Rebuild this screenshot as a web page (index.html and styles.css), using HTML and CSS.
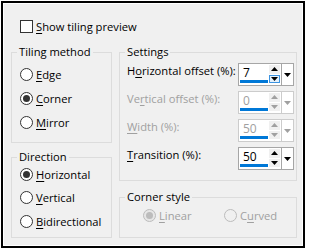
FILE: index.html
```html
<!DOCTYPE html>
<html>
<head>
<meta charset="utf-8">
<link rel="stylesheet" href="styles.css">
</head>
<body>
<div class="frame">
  <div class="panel">
    <div class="check-row"><span class="checkbox"></span><span><u>S</u>how tiling preview</span></div>
    <div class="cols">
      <div class="col col-left">
        <fieldset class="group g-tiling">
          <legend>Tiling method</legend>
          <div class="radio-list list-tiling">
            <div class="radio-row"><span class="radio"></span><span><u>E</u>dge</span></div>
            <div class="radio-row"><span class="radio checked"></span><span><u>C</u>orner</span></div>
            <div class="radio-row"><span class="radio"></span><span><u>M</u>irror</span></div>
          </div>
        </fieldset>
        <fieldset class="group g-direction">
          <legend>Direction</legend>
          <div class="radio-list list-direction">
            <div class="radio-row"><span class="radio checked"></span><span><u>H</u>orizontal</span></div>
            <div class="radio-row"><span class="radio"></span><span><u>V</u>ertical</span></div>
            <div class="radio-row"><span class="radio"></span><span><u>B</u>idirectional</span></div>
          </div>
        </fieldset>
      </div>
      <div class="col col-right">
        <fieldset class="group g-settings">
          <legend>Settings</legend>
          <div class="settings-list">
            <div class="set-row">
              <span class="set-label">H<u>o</u>rizontal offset (%):</span>
              <div class="spin">
                <div class="spin-edit"><div class="spin-field">7</div></div>
                <div class="spin-ud">
                  <span class="ud"><svg width="7" height="4" viewBox="0 0 7 4"><path d="M0 4 L3.5 0 L7 4Z"/></svg></span>
                  <span class="ud ud-hot"><svg width="7" height="4" viewBox="0 0 7 4"><path d="M0 0 L7 0 L3.5 4Z"/></svg></span>
                </div>
                <div class="spin-drop"><svg width="7" height="4" viewBox="0 0 7 4"><path d="M0 0 L7 0 L3.5 4Z"/></svg></div>
              </div>
            </div>
            <div class="set-row disabled">
              <span class="set-label">Ve<u>r</u>tical offset (%):</span>
              <div class="spin">
                <div class="spin-edit"><div class="spin-field">0</div></div>
                <div class="spin-ud">
                  <span class="ud"><svg width="7" height="4" viewBox="0 0 7 4"><path d="M0 4 L3.5 0 L7 4Z"/></svg></span>
                  <span class="ud"><svg width="7" height="4" viewBox="0 0 7 4"><path d="M0 0 L7 0 L3.5 4Z"/></svg></span>
                </div>
                <div class="spin-drop"><svg width="7" height="4" viewBox="0 0 7 4"><path d="M0 0 L7 0 L3.5 4Z"/></svg></div>
              </div>
            </div>
            <div class="set-row disabled">
              <span class="set-label"><u>W</u>idth (%):</span>
              <div class="spin">
                <div class="spin-edit"><div class="spin-field">50</div></div>
                <div class="spin-ud">
                  <span class="ud"><svg width="7" height="4" viewBox="0 0 7 4"><path d="M0 4 L3.5 0 L7 4Z"/></svg></span>
                  <span class="ud"><svg width="7" height="4" viewBox="0 0 7 4"><path d="M0 0 L7 0 L3.5 4Z"/></svg></span>
                </div>
                <div class="spin-drop"><svg width="7" height="4" viewBox="0 0 7 4"><path d="M0 0 L7 0 L3.5 4Z"/></svg></div>
              </div>
            </div>
            <div class="set-row">
              <span class="set-label"><u>T</u>ransition (%):</span>
              <div class="spin">
                <div class="spin-edit"><div class="spin-field">50</div></div>
                <div class="spin-ud">
                  <span class="ud"><svg width="7" height="4" viewBox="0 0 7 4"><path d="M0 4 L3.5 0 L7 4Z"/></svg></span>
                  <span class="ud"><svg width="7" height="4" viewBox="0 0 7 4"><path d="M0 0 L7 0 L3.5 4Z"/></svg></span>
                </div>
                <div class="spin-drop"><svg width="7" height="4" viewBox="0 0 7 4"><path d="M0 0 L7 0 L3.5 4Z"/></svg></div>
              </div>
            </div>
          </div>
        </fieldset>
        <fieldset class="group g-corner">
          <legend>Corner style</legend>
          <div class="corner-row">
            <div class="radio-row disabled corner-linear"><span class="radio checked"></span><span><u>L</u>inear</span></div>
            <div class="radio-row disabled"><span class="radio"></span><span>C<u>u</u>rved</span></div>
          </div>
        </fieldset>
      </div>
    </div>
  </div>
</div>
</body>
</html>
```
FILE: styles.css
```css
* { box-sizing: border-box; }
body {
  margin: 0;
  background: #fff;
  font-family: "Open Sans", "Noto Sans", sans-serif;
  font-size: 11.2px;
  color: #000;
  white-space: nowrap;
}
u { text-underline-offset: 2px; }
.frame {
  margin: 1px 0 0 1px;
  width: 304px;
  height: 247px;
  border: 2px solid #000;
  padding: 1px;
  background: #fff;
}
.panel {
  height: 100%;
  background: #f0f0f0;
  padding: 14px 5px 0 7px;
}
.check-row {
  display: flex;
  align-items: center;
  height: 16px;
  padding-left: 9px;
  gap: 3px;
}
.checkbox {
  width: 13px;
  height: 13px;
  border: 1px solid #333;
  background: #fff;
}
.cols {
  display: flex;
  gap: 7px;
  margin-top: 10px;
}
.col { display: flex; flex-direction: column; }
.col-left { width: 101px; gap: 6px; }
.col-right { width: 178px; gap: 8px; }
.group {
  margin: 0;
  padding: 0;
  min-width: 0;
  border: 1px solid #dcdcdc;
}
.group legend {
  padding: 0 2px;
  margin-left: 5px;
  line-height: 16px;
}
.g-tiling { height: 99px; }
.g-direction { height: 89px; }
.g-settings { height: 137px; }
.g-corner { height: 49px; }
.radio-list {
  display: flex;
  flex-direction: column;
  padding-left: 8px;
}
.list-tiling { padding-top: 5px; gap: 6px; }
.list-direction { padding-top: 0; gap: 5.5px; }
.radio-row {
  display: flex;
  align-items: center;
  height: 18px;
  gap: 3px;
}
.radio {
  width: 13px;
  height: 13px;
  border-radius: 50%;
  border: 1px solid #333;
  background: #fff;
  display: flex;
  align-items: center;
  justify-content: center;
  flex: none;
}
.radio.checked::after {
  content: "";
  width: 7px;
  height: 7px;
  border-radius: 50%;
  background: #333;
}
.radio-row.disabled { color: #a0a0a0; }
.radio-row.disabled .radio {
  border-color: #bcbcbc;
  background: #f0f0f0;
}
.radio-row.disabled .radio.checked { background: #e6e6e6; }
.radio-row.disabled .radio.checked::after { background: #bcbcbc; }
.settings-list {
  display: flex;
  flex-direction: column;
  gap: 5px;
  padding: 3px 2px 0 7px;
}
.set-row {
  display: flex;
  align-items: flex-start;
  height: 23px;
}
.set-label {
  flex: 1;
  line-height: 16px;
}
.set-row.disabled { color: #a0a0a0; }
.spin {
  display: flex;
  flex: none;
  width: 56px;
  height: 23px;
  border: 1px solid #a6a6a6;
  background: #fff;
}
.spin-edit {
  width: 29px;
  padding: 0 0 2px 1px;
}
.spin-field {
  height: 100%;
  border-bottom: 3px solid #0078d7;
  padding-left: 3px;
  line-height: 18px;
  font-size: 12px;
}
.spin-ud {
  width: 13px;
  display: flex;
  flex-direction: column;
  gap: 1px;
  padding: 1px 1px 2px 1px;
}
.ud {
  flex: 1;
  display: flex;
  align-items: center;
  justify-content: center;
  background: #f0f0f0;
  border: 1px solid #f0f0f0;
}
.ud-hot {
  background: #e5f1fb;
  border-color: #3c93e0;
}
.ud svg, .spin-drop svg { display: block; fill: #000; }
.spin-drop {
  width: 12px;
  border-left: 1px solid #a6a6a6;
  display: flex;
  align-items: center;
  justify-content: center;
}
.set-row.disabled .spin { border-color: #cccccc; }
.set-row.disabled .spin-drop { border-color: #cccccc; }
.set-row.disabled svg { fill: #a0a0a0; }
.corner-row {
  display: flex;
  padding-left: 23px;
  height: 20px;
}
.corner-row .radio-row { height: 20px; }
.corner-linear { width: 81px; }
```
